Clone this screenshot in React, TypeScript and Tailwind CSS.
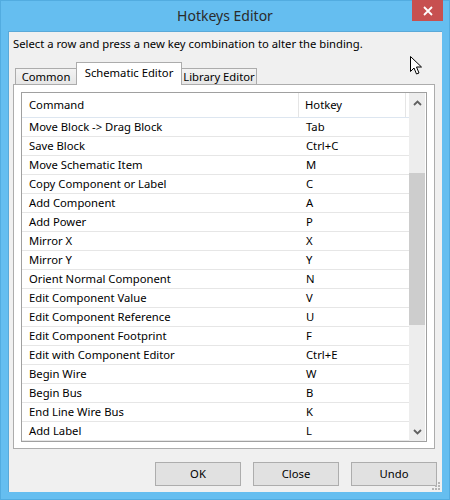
import React from "react";

const rows: [string, string][] = [
  ["Move Block -> Drag Block", "Tab"],
  ["Save Block", "Ctrl+C"],
  ["Move Schematic Item", "M"],
  ["Copy Component or Label", "C"],
  ["Add Component", "A"],
  ["Add Power", "P"],
  ["Mirror X", "X"],
  ["Mirror Y", "Y"],
  ["Orient Normal Component", "N"],
  ["Edit Component Value", "V"],
  ["Edit Component Reference", "U"],
  ["Edit Component Footprint", "F"],
  ["Edit with Component Editor", "Ctrl+E"],
  ["Begin Wire", "W"],
  ["Begin Bus", "B"],
  ["End Line Wire Bus", "K"],
  ["Add Label", "L"],
];

function Chevron({ up }: { up?: boolean }) {
  return (
    <svg width="9" height="6" viewBox="0 0 9 6">
      <polyline
        points={up ? "1,5 4.5,1.5 8,5" : "1,1 4.5,4.5 8,1"}
        fill="none"
        stroke="#606060"
        strokeWidth="1.8"
      />
    </svg>
  );
}

export default function App() {
  return (
    <div className="relative w-[450px] h-[500px] bg-[#65bef0] border border-[#52ace0] font-['Noto_Sans',sans-serif] text-[11.25px] text-black">
      {/* title bar */}
      <div className="relative h-[30px] flex items-center justify-center">
        <span className="text-[14px] text-[#2b2b2b] leading-none">Hotkeys Editor</span>
        <div className="absolute top-[-1px] right-[6px] w-[31px] h-[21px] bg-[#c75050] flex items-center justify-center">
          <svg width="10" height="10" viewBox="0 0 10 10">
            <path d="M1 1 L9 9 M9 1 L1 9" stroke="white" strokeWidth="1.8" />
          </svg>
        </div>
      </div>
      {/* client area */}
      <div className="relative ml-[7px] w-[434px] h-[461px] bg-[#f0f0f0] border-l border-t border-[#5aa9d8]">
        <div className="pl-[4px] pt-[4px] h-[30px] leading-[15px]">
          Select a row and press a new key combination to alter the binding.
        </div>
        {/* tabs */}
        <div className="pl-[6px] flex items-end h-[22px]">
          <div className="h-[16px] w-[62px] border border-b-0 border-[#acacac] bg-linear-to-b from-[#f3f3f3] to-[#e6e6e6] flex items-center justify-center leading-none">
            Common
          </div>
          <div className="relative z-10 -ml-px -mb-px h-[23px] w-[106px] border border-b-0 border-[#acacac] bg-white flex items-start justify-center leading-none pt-[4px]">
            Schematic Editor
          </div>
          <div className="-ml-px h-[16px] w-[76px] border border-b-0 border-[#acacac] bg-linear-to-b from-[#f3f3f3] to-[#e6e6e6] flex items-center justify-center leading-none">
            Library Editor
          </div>
        </div>
        {/* tab panel */}
        <div className="ml-[4px] w-[422px] h-[365px] border border-[#acacac] bg-white pt-[7px] pl-[7px]">
          <div className="w-[406px] h-[350px] border border-[#a0a0a0] flex overflow-hidden">
            <div className="w-[387px] flex flex-col">
              <div className="h-[25px] shrink-0 flex border-b border-[#dde6f0] bg-white">
                <div className="w-[277px] border-r border-[#e5e5e5] pl-[7px] flex items-center">Command</div>
                <div className="w-[107px] border-r border-[#e5e5e5] pl-[6px] flex items-center">Hotkey</div>
              </div>
              {rows.map(([cmd, key]) => (
                <div key={cmd} className="h-[19px] shrink-0 flex items-center border-b border-[#e6e6e6]">
                  <div className="w-[277px] pl-[7px] whitespace-nowrap">{cmd}</div>
                  <div className="w-[107px] pl-[7px]">{key}</div>
                </div>
              ))}
            </div>
            <div className="w-[16px] bg-[#ededed] flex flex-col items-center shrink-0">
              <div className="h-[17px] flex items-center justify-center pt-[2px]">
                <Chevron up />
              </div>
              <div className="mt-[63px] w-full h-[152px] bg-[#cdcdcd]" />
              <div className="flex-1" />
              <div className="h-[17px] flex items-center justify-center pb-[1px]">
                <Chevron />
              </div>
            </div>
          </div>
        </div>
        {/* buttons */}
        <div className="flex justify-end gap-[12px] pr-[5px] mt-[13px]">
          {["OK", "Close", "Undo"].map((b) => (
            <div
              key={b}
              className="w-[86px] h-[24px] border border-[#adadad] bg-[#e1e1e1] flex items-center justify-center leading-none"
            >
              {b}
            </div>
          ))}
        </div>
        {/* resize grip */}
        <svg className="absolute right-[2px] bottom-[2px]" width="9" height="9" viewBox="0 0 9 9">
          <rect x="7" y="1" width="2" height="2" fill="#b5b5b5" />
          <rect x="4" y="4" width="2" height="2" fill="#b5b5b5" />
          <rect x="7" y="4" width="2" height="2" fill="#b5b5b5" />
          <rect x="1" y="7" width="2" height="2" fill="#b5b5b5" />
          <rect x="4" y="7" width="2" height="2" fill="#b5b5b5" />
          <rect x="7" y="7" width="2" height="2" fill="#b5b5b5" />
        </svg>
      </div>
      {/* mouse cursor */}
      <svg className="absolute left-[408px] top-[54px]" width="14" height="21" viewBox="0 0 14 21">
        <path
          d="M1.5 1.5 L1.5 16.5 L5 13 L7.5 19 L10 18 L7.5 12 L12.5 12 Z"
          fill="white"
          stroke="black"
          strokeWidth="1"
          strokeLinejoin="miter"
        />
      </svg>
    </div>
  );
}
